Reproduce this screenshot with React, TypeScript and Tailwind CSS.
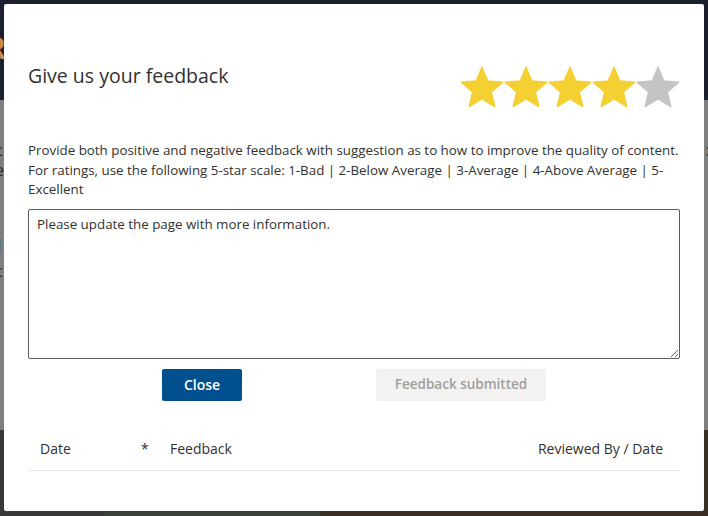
import React from "react";

const Star = ({ color }: { color: string }) => (
  <svg width="44" height="42" viewBox="1.5 1.5 21 20.1" className="block">
    <path
      d="M12 17.27L18.18 21l-1.64-7.03L22 9.24l-7.19-.61L12 2 9.19 8.63 2 9.24l5.46 4.73L5.82 21z"
      fill={color}
      stroke={color}
      strokeWidth="0.6"
      strokeLinejoin="round"
    />
  </svg>
);

export default function App() {
  const font = { fontFamily: '"Open Sans", "Noto Sans", sans-serif' };
  return (
    <div className="relative w-[708px] h-[516px] overflow-hidden" style={font}>
      <div className="flex flex-col h-full">
        <div className="h-[100px] bg-[#1c1f2e]" />
        <div className="h-[330px] bg-[#7f7f7f]" />
        <div className="flex-1 flex">
          <div className="w-[104px] bg-[#3a3838]" />
          <div className="w-[216px] bg-[#3b403b]" />
          <div className="flex-1 bg-[#3a3024]" />
        </div>
      </div>
      <span className="absolute left-[-14px] top-[30px] text-[30px] leading-[36px] font-bold text-[#c98a4a]">R</span>
      <span className="absolute left-[-5px] top-[140px] text-[16px] leading-[20px] text-[#2a2a2a]">c</span>
      <span className="absolute left-[-5px] top-[160px] text-[16px] leading-[20px] text-[#2a2a2a]">e</span>
      <span className="absolute left-[-3px] top-[234px] text-[18px] leading-[22px] text-[#1f4f8a]">l</span>
      <span className="absolute left-[-5px] top-[261px] text-[16px] leading-[20px] text-[#2a2a2a]">c</span>
      <span className="absolute right-[-2px] top-[140px] text-[16px] leading-[20px] text-[#2a2a2a]">:</span>
      <div className="absolute left-[4px] top-[4px] w-[700px] h-[507px] bg-white rounded-[2px] px-[24px] pt-[59px] text-[#323130]">
        <div className="flex justify-between items-start">
          <h2 className="text-[19.5px] leading-[26px] font-normal">Give us your feedback</h2>
          <div className="flex gap-0 mt-[3px] mr-[0px]">
            <Star color="#f5d033" />
            <Star color="#f5d033" />
            <Star color="#f5d033" />
            <Star color="#f5d033" />
            <Star color="#c4c4c4" />
          </div>
        </div>
        <p className="mt-[33px] text-[13.35px] leading-[19.5px]">
          Provide both positive and negative feedback with suggestion as to how to improve the quality of content. For ratings, use the following 5-star scale: 1-Bad | 2-Below Average | 3-Average | 4-Above Average | 5-Excellent
        </p>
        <textarea
          className="block mt-[9px] w-full h-[150px] border border-[#605e5c] rounded-[2px] px-[8px] py-[5px] text-[13.35px] leading-[19px] text-[#323130] resize-y outline-none"
          style={font}
          defaultValue="Please update the page with more information."
        />
        <div className="flex mt-[10px]">
          <button className="ml-[134px] w-[80px] h-[32px] bg-[#004f8e] text-white text-[14px] font-semibold rounded-[2px]">
            Close
          </button>
          <button className="ml-[134px] w-[170px] h-[32px] bg-[#f3f2f1] text-[#a19f9d] text-[13.5px] font-semibold rounded-[2px]">
            Feedback submitted
          </button>
        </div>
        <div className="flex items-center h-[44px] mt-[26px] border-b border-[#e8e8e8] text-[14px]">
          <span className="ml-[12px] w-[101px]">Date</span>
          <span className="w-[29px]">*</span>
          <span>Feedback</span>
          <span className="ml-auto mr-[17px]">Reviewed By / Date</span>
        </div>
      </div>
    </div>
  );
}
